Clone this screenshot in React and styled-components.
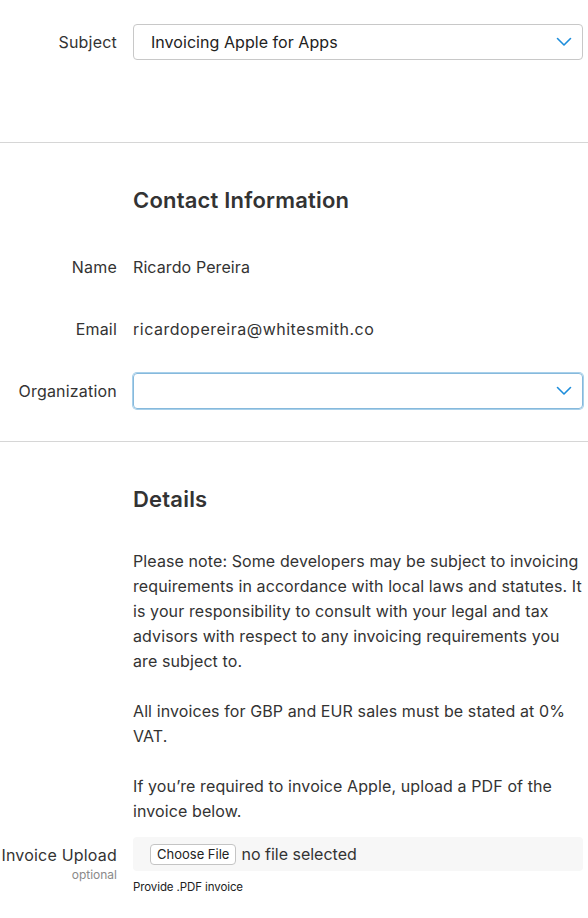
import React from 'react';
import styled, {createGlobalStyle} from 'styled-components';

const GlobalStyle = createGlobalStyle`
  html, body {
    margin: 0;
    padding: 0;
    background: #fff;
  }
  body {
    font-family: Inter, "Noto Sans", sans-serif;
    color: #333;
    -webkit-font-smoothing: antialiased;
  }
`

const Page = styled.div`
  width: 588px;
`
const Section = styled.section`
  padding: ${p => p.$pad};
  border-bottom: ${p => p.$last ? 'none' : '1px solid #d6d6d6'};
  display: flex;
  flex-direction: column;
`
const Row = styled.div`
  display: grid;
  grid-template-columns: 117px 450px;
  column-gap: 16px;
  align-items: ${p => p.$top ? 'start' : 'center'};
  min-height: ${p => p.$h || 0}px;
  margin-top: ${p => p.$mt || 0}px;
`
const Label = styled.div`
  text-align: right;
  font-size: 16px;
  color: #333;
  letter-spacing: 0.2px;
  padding-top: ${p => p.$pt || 0}px;
`
const Optional = styled.div`
  font-size: 12px;
  color: #8a8a8a;
  letter-spacing: 0;
  margin-top: 2px;
`
const Value = styled.div`
  font-size: 16px;
  color: #333;
  letter-spacing: ${p => p.$wide ? '0.5px' : '0.1px'};
`
const Heading = styled.h2`
  margin: 0;
  grid-column: 2;
  font-size: 22px;
  line-height: 28px;
  font-weight: 600;
  color: #333;
  letter-spacing: 0.2px;
`
const SelectBox = styled.div`
  box-sizing: border-box;
  height: 36px;
  border-radius: 4px;
  border: 1px solid ${p => p.$focus ? '#86b9dc' : '#c8c8c8'};
  box-shadow: ${p => p.$focus ? '0 0 0 1px #a8d0ea' : 'none'};
  display: flex;
  align-items: center;
  justify-content: space-between;
  padding: 0 10px 0 17px;
  font-size: 16px;
  color: #222;
  letter-spacing: 0.05px;
`
const Chevron = () => (
    <svg width="16" height="10" viewBox="0 0 16 10">
        <path d="M1.5 1.5 L8 8 L14.5 1.5" fill="none" stroke="#1d8ddb" strokeWidth="1.6" strokeLinecap="round" strokeLinejoin="round"/>
    </svg>
)
const Copy = styled.div`
  font-size: 16px;
  line-height: 25px;
  color: #333;
  letter-spacing: 0.1px;
  p {
    margin: 0 0 25px;
  }
  p:last-child {
    margin: 0;
  }
`
const UploadBox = styled.div`
  height: 34px;
  background: #f7f7f7;
  border-radius: 4px;
  display: flex;
  align-items: center;
  padding-left: 17px;
  gap: 5px;
  font-size: 16px;
  color: #333;
`
const FileButton = styled.button`
  font-family: Inter, sans-serif;
  font-size: 13px;
  height: 21px;
  padding: 0 6px;
  background: #fff;
  border: 1px solid #c4c4c4;
  border-radius: 4px;
  color: #222;
`
const Hint = styled.div`
  font-size: 11.5px;
  color: #222;
  letter-spacing: -0.1px;
  margin-top: 9px;
`

export default function App() {
    return (
        <Page>
            <GlobalStyle/>
            <Section $pad="24px 0 82px">
                <Row>
                    <Label>Subject</Label>
                    <SelectBox>Invoicing Apple for Apps<Chevron/></SelectBox>
                </Row>
            </Section>

            <Section $pad="43px 0 32px">
                <Row><Heading>Contact Information</Heading></Row>
                <Row $h={40} $mt={33}>
                    <Label>Name</Label>
                    <Value>Ricardo Pereira</Value>
                </Row>
                <Row $h={40} $mt={22}>
                    <Label>Email</Label>
                    <Value $wide>ricardopereira@whitesmith.co</Value>
                </Row>
                <Row $mt={24}>
                    <Label>Organization</Label>
                    <SelectBox $focus><span/><Chevron/></SelectBox>
                </Row>
            </Section>

            <Section $pad="43px 0 20px" $last>
                <Row><Heading>Details</Heading></Row>
                <Row $mt={36}>
                    <span/>
                    <Copy>
                        <p>Please note: Some developers may be subject to invoicing requirements in accordance with local laws and statutes. It is your responsibility to consult with your legal and tax advisors with respect to any invoicing requirements you are subject to.</p>
                        <p>All invoices for GBP and EUR sales must be stated at 0% VAT.</p>
                        <p>If you’re required to invoice Apple, upload a PDF of the invoice below.</p>
                    </Copy>
                </Row>
                <Row $top $mt={13}>
                    <Label $pt={8}>
                        Invoice Upload
                        <Optional>optional</Optional>
                    </Label>
                    <div>
                        <UploadBox>
                            <FileButton>Choose File</FileButton>
                            no file selected
                        </UploadBox>
                        <Hint>Provide .PDF invoice</Hint>
                    </div>
                </Row>
            </Section>
        </Page>
    )
}
